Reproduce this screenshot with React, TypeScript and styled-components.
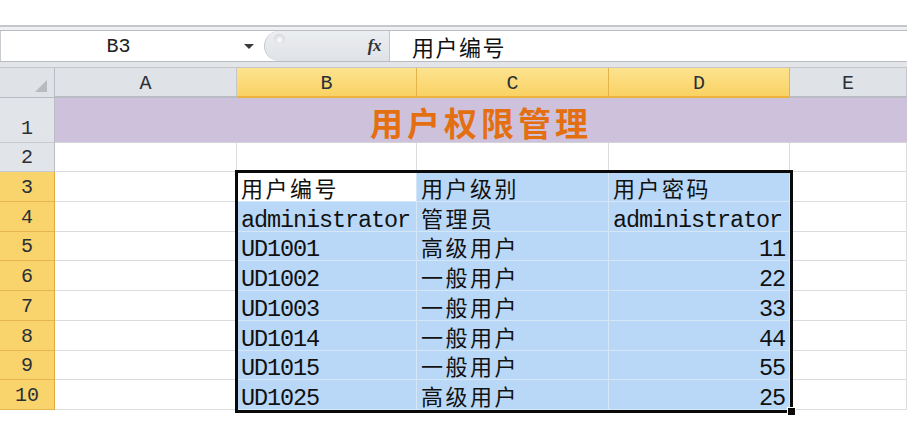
import React from 'react';
import styled, { createGlobalStyle, css } from 'styled-components';

const Global = createGlobalStyle`
  html, body { margin: 0; padding: 0; background: #ffffff; }
  body { font-family: "Liberation Mono", "Noto Sans CJK SC", monospace; }
`;

const Page = styled.div`
  width: 920px;
  height: 437px;
  overflow: hidden;
  background: #ffffff;
`;

const Workbook = styled.div`
  width: 907px;
  padding-top: 25px;
`;

const FormulaBar = styled.div`
  border-top: 2px solid #c4c7cc;
  padding-top: 3px;
  background: #eef0f2;
  border-bottom: 1px solid #c3c6cb;
`;

const FormulaRow = styled.div`
  display: flex;
  height: 32px;
  box-sizing: border-box;
  border-top: 1px solid #b9bdc3;
  border-bottom: 1px solid #b9bdc3;
  background: #ffffff;
`;

const BottomStrip = styled.div`
  height: 5px;
  background: #e3e5e8;
`;

const NameBox = styled.div`
  display: flex;
  width: 263px;
  flex: none;
  border-left: 1px solid #c8ccd1;
`;

const NameText = styled.div`
  width: 235px;
  display: flex;
  align-items: center;
  justify-content: center;
  font-family: "Liberation Mono", monospace;
  font-size: 20px;
  color: #222;
`;

const ArrowSlot = styled.div`
  flex: 1;
  display: flex;
  align-items: center;
  justify-content: center;
  padding-right: 2px;
`;

const DownArrow = styled.span`
  width: 0;
  height: 0;
  border-left: 5px solid transparent;
  border-right: 5px solid transparent;
  border-top: 5px solid #3a3a3a;
`;

const FxBox = styled.div`
  position: relative;
  width: 125px;
  flex: none;
  display: flex;
  align-items: center;
  justify-content: flex-end;
  padding-right: 8px;
  box-sizing: border-box;
  background: linear-gradient(#eceef1, #dfe2e6);
  border-left: 1px solid #c3c7cc;
  border-radius: 15px 0 0 15px;
`;

const CancelDot = styled.span`
  position: absolute;
  left: 9px;
  top: 3px;
  width: 11px;
  height: 10px;
  border-radius: 50%;
  background: radial-gradient(circle at 50% 60%, #ffffff 0%, #d5d8dc 70%, #c4c8cd 100%);
`;

const FxText = styled.span`
  font-family: "Liberation Serif", serif;
  font-style: italic;
  font-weight: bold;
  font-size: 17px;
  color: #333;
  letter-spacing: -0.5px;
`;

const FormulaInput = styled.div`
  flex: 1;
  display: flex;
  align-items: center;
  padding-left: 22px;
  border-left: 1px solid #c3c7cc;
  font-family: "Noto Sans CJK SC", sans-serif;
  font-size: 22px;
  letter-spacing: 1.5px;
  color: #111;
`;

const Sheet = styled.div`
  position: relative;
  display: grid;
  grid-template-columns: 55px 182px 180px 192px 181px 117px;
  grid-template-rows: 30px 45px 29px repeat(8, 29.75px);
`;

const headerBase = css`
  display: flex;
  justify-content: center;
  box-sizing: border-box;
  font-family: "Liberation Mono", monospace;
  font-size: 20px;
  color: #2b2f36;
`;

const Corner = styled.div`
  position: relative;
  background: #dfe2e6;
  border-right: 1px solid #b9bdc3;
  border-bottom: 1px solid #b9bdc3;
`;

const CornerMark = styled.span`
  position: absolute;
  right: 7px;
  bottom: 5px;
  width: 0;
  height: 0;
  border-left: 12px solid transparent;
  border-bottom: 12px solid #b8bcc1;
`;

const ColHeader = styled.div<{ $sel?: boolean }>`
  ${headerBase};
  align-items: center;
  padding-top: 2px;
  background: ${(p) => (p.$sel ? 'linear-gradient(#fde38f, #f9d264)' : '#dfe2e6')};
  border-right: 1px solid ${(p) => (p.$sel ? '#e3b44a' : '#c3c7cc')};
  border-bottom: 2px solid ${(p) => (p.$sel ? '#eeb33c' : '#b9bdc3')};
`;

const RowHeader = styled.div<{ $sel?: boolean }>`
  ${headerBase};
  align-items: flex-end;
  line-height: 24px;
  padding-bottom: 1px;
  background: ${(p) => (p.$sel ? '#f9d46c' : '#e1e4e8')};
  border-right: 1px solid ${(p) => (p.$sel ? '#e0a93a' : '#b9bdc3')};
  border-bottom: 1px solid ${(p) => (p.$sel ? '#e5b650' : '#c6cace')};
`;

const TitleCell = styled.div`
  grid-column: 2 / 7;
  display: flex;
  align-items: center;
  justify-content: center;
  padding-top: 4px;
  box-sizing: border-box;
  background: #cdc1db;
  border-bottom: 1px solid #d4d4d8;
  font-family: "Noto Sans CJK SC", sans-serif;
  font-weight: bold;
  font-size: 33px;
  letter-spacing: 4px;
  color: #e46f10;
`;

const Cell = styled.div<{ $sel?: boolean; $active?: boolean; $cjk?: boolean; $num?: boolean }>`
  display: flex;
  align-items: flex-end;
  justify-content: ${(p) => (p.$num ? 'flex-end' : 'flex-start')};
  box-sizing: border-box;
  padding: 0 4px 0 4px;
  white-space: nowrap;
  background: ${(p) => (p.$sel && !p.$active ? '#b9d8f8' : '#ffffff')};
  border-right: 1px solid ${(p) => (p.$sel ? '#d5e6f7' : '#dadcde')};
  border-bottom: 1px solid ${(p) => (p.$sel ? '#d5e6f7' : '#dadcde')};
  color: #111;
  ${(p) =>
    p.$cjk
      ? css`
          font-family: "Noto Sans CJK SC", sans-serif;
          font-size: 22px;
          line-height: 28px;
          letter-spacing: 2.5px;
        `
      : css`
          font-family: "Liberation Mono", monospace;
          font-size: 23.5px;
          line-height: 20px;
          letter-spacing: -1.1px;
        `}
`;

const SelectionFrame = styled.div`
  position: absolute;
  left: 235px;
  top: 102px;
  width: 558px;
  height: 243px;
  box-sizing: border-box;
  border: 3px solid #0a0a0a;
  pointer-events: none;
`;

const FillHandle = styled.span`
  position: absolute;
  right: -6px;
  bottom: -6px;
  width: 7px;
  height: 7px;
  background: #0a0a0a;
  border: 1px solid #ffffff;
`;

const columns = ['A', 'B', 'C', 'D', 'E'];
const selectedCols = ['B', 'C', 'D'];

const data: string[][] = [
  ['用户编号', '用户级别', '用户密码'],
  ['administrator', '管理员', 'administrator'],
  ['UD1001', '高级用户', '11'],
  ['UD1002', '一般用户', '22'],
  ['UD1003', '一般用户', '33'],
  ['UD1014', '一般用户', '44'],
  ['UD1015', '一般用户', '55'],
  ['UD1025', '高级用户', '25'],
];

const isCjk = (s: string) => /[\u4e00-\u9fff]/.test(s);
const isNum = (s: string) => /^\d+(\.\d+)?$/.test(s);

export default function App() {
  return (
    <Page>
      <Global />
      <Workbook>
        <FormulaBar>
          <FormulaRow>
            <NameBox>
              <NameText>B3</NameText>
              <ArrowSlot>
                <DownArrow />
              </ArrowSlot>
            </NameBox>
            <FxBox>
              <CancelDot />
              <FxText>fx</FxText>
            </FxBox>
            <FormulaInput>用户编号</FormulaInput>
          </FormulaRow>
          <BottomStrip />
        </FormulaBar>
        <Sheet>
          <Corner>
            <CornerMark />
          </Corner>
          {columns.map((c) => (
            <ColHeader key={c} $sel={selectedCols.includes(c)}>
              {c}
            </ColHeader>
          ))}

          <RowHeader>1</RowHeader>
          <TitleCell>用户权限管理</TitleCell>

          <RowHeader>2</RowHeader>
          {columns.map((c) => (
            <Cell key={c} />
          ))}

          {data.map((row, ri) => (
            <React.Fragment key={ri}>
              <RowHeader $sel>{ri + 3}</RowHeader>
              <Cell />
              {row.map((v, ci) => (
                <Cell
                  key={ci}
                  $sel
                  $active={ri === 0 && ci === 0}
                  $cjk={isCjk(v)}
                  $num={isNum(v)}
                >
                  {v}
                </Cell>
              ))}
              <Cell />
            </React.Fragment>
          ))}

          <SelectionFrame>
            <FillHandle />
          </SelectionFrame>
        </Sheet>
      </Workbook>
    </Page>
  );
}
